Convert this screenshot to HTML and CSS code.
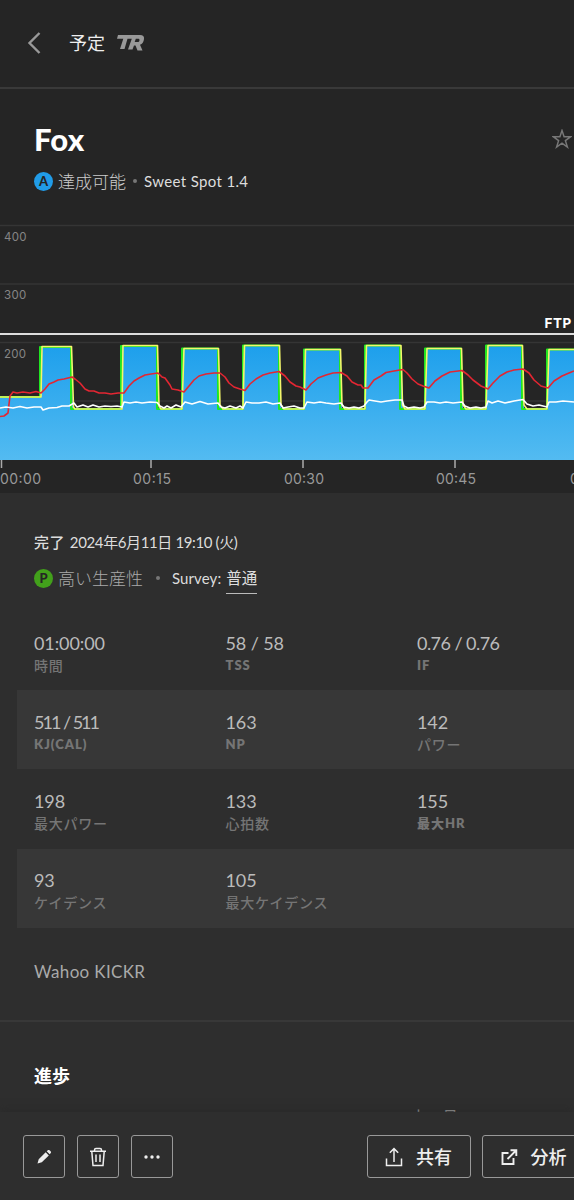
FILE: index.html
```html
<!DOCTYPE html>
<html lang="ja">
<head>
    <meta charset="UTF-8">
    <meta name="viewport" content="width=device-width, initial-scale=1.0">
    <title>Fox</title>
    <link rel="stylesheet" href="styles.css">
</head>
<body>
    <header class="top-bar">
        <svg class="back" width="14" height="22" viewBox="0 0 14 22"><path d="M12.500 1 2.500 11l10 10"/></svg>
        <span class="top-title">予定</span>
        <svg class="logo" width="28" height="16" viewBox="0 0 28 16">
            <path fill-rule="evenodd" d="M1 0H23Q27.500 0 27 4Q26.500 8.500 23 9.800L25.500 15.500H20.500L18.500 10.500H17L15.500 14.500H11L14.800 3.800H10.500L7.500 14H3L6.300 3.800H0ZM18.800 3.800L17.700 7H21.500Q22.500 6.500 22.500 5.200Q22.500 3.800 21.500 3.800Z"/>
        </svg>
    </header>

    <section class="workout">
        <div class="workout-head">
            <h1>Fox</h1>
            <svg class="star" width="20" height="20" viewBox="0 0 20 20"><path d="M10 1.500l2.100 6.200h6.700l-5.400 3.900 2 6.400-5.400-3.900-5.400 3.900 2-6.400-5.400-3.900h6.700z"/></svg>
        </div>
        <div class="workout-type">
            <span class="badge badge-a">A</span>
            <span class="level">達成可能</span>
            <span class="dot"></span>
            <span class="zone">Sweet Spot 1.4</span>
        </div>
    </section>

    <svg class="chart" width="574" height="273" viewBox="0 220 574 273">
        <defs>
            <linearGradient id="power" x1="0" y1="345" x2="0" y2="460" gradientUnits="userSpaceOnUse">
                <stop offset="0" stop-color="#1d9fec"/>
                <stop offset="1" stop-color="#53bbf1"/>
            </linearGradient>
        </defs>
        <path class="grid" d="M0 225.500H574M0 284H574M0 342.500H574M0 401H574"/>
        <g class="y-labels">
            <text x="4" y="240.500">400</text>
            <text x="4" y="299">300</text>
            <text x="4" y="357.500">200</text>
        </g>
        <path fill="url(#power)" d="M0 460V397H40.500L42 347H71L73 409H122V346H157L158.500 409H183V349H218L220 409H244V346H279L281 409H305V350H340L342 409H366V346H401L403 409H426V349H461L463 409H487V346H522L524 409H548V350H574V460Z"/>
        <path class="target" d="M0 397H40V347H71V409H121V346H157V409H182V348.500H218V409H243V345.500H279V409H304V349.500H340V409H365V345.500H400V409H425V348.500H461V409H486V345.500H522V409H547V349.500H574"/>
        <path class="actual" d="M0 397H41L42 346.500H71.500L73.500 407 75 409H122L123 345.500H157.500L159 406 161 409H182L184 348.500H218.500L220 405 223 409H243L244.500 345.500H279.500L281 405 284 409H304L305.500 349.500H340.500L342 405 345 409H365L366.500 345.500H401L402.500 405 405 409H425L427 348.500H461.500L463 405 466 409H486L488 345.500H522.500L524 405 527 409H547L549 349.500H574"/>
        <path class="heart" d="M0 416.500L4 416 8 413 9 404 10 396 13 392 17 393 23 392 30 393 36 391.500 41 393 45 389 49 384 54 382 58 380 64 379 72 377 75 379 80 383 85 389 89 391 94 391 99 393 105 393 111 394 118 393 124 393 129 386 134 381 139 378 145 375 151 374 158 373 162 377 165 378 170 385 172 389 178 390 184 392 189 386 194 380 199 376 206 374 214 373 220 373 225 377 229 383 234 387 240 389 245 390.500 250 384 256 379 263 375 270 373 279 371.500 285 376 290 382 296 386 300 387 306 390 311 384 318 378 326 375 333 373 341 372.500 347 376 352 382 358 385 361 385 363 388 368 388 374 380 381 376 386 372.500 394 371 403 369.500 407 373 412 379 418 384 423 386 429 388 435 381 442 376 450 372 462 370.500 468 375 473 380 481 386 488 389 493 383 500 376 507 372 514 370 523 369 529 373 534 380 541 386 548 388 554 381 562 376 569 373 574 371"/>
        <path class="cadence" d="M0 408L6 407 13 408 20 406.500 27 408 34 407 41 407 43 410 49 408 57 407.500 62 406 69 406 74 403 77 407 83 405 88 407 93 405 99 407 105 406 111 406.500 117 406 122 407 124 402 130 403 136 402 142 403 150 402 157 402.500 160 406 164 408 167 406 171 408 176 405 181 407 185 402 192 404 200 401.500 208 404 218 403 221 407 225 408 230 406 236 408 240 406 243 408 246 402 252 403 259 403 266 402 273 404 280 403 283 408 288 407 294 406 300 408 304 408 307 402 314 403 320 402 326 403 334 404 341 403 344 407 349 408 354 407 359 408 364 406 367 402 369 400 375 401 381 402 387 401 395 400 402 400 404 406 408 408 414 407 420 408 424 407 427 402 434 402 440 403 446 402 453 403 462 402 465 406 470 408 476 407 481 408 486 407 488 401 492 403 498 401 505 403 514 401 523 399.500 527 404 533 406 539 405 547 407 549 402 556 402 563 401 574 402"/>
        <path class="ftp" d="M0 334H574"/>
        <text class="ftp-label" x="544.500" y="328">FTP</text>
        <path class="ticks" d="M1.500 460V468M151 460V468M303 460V468M455 460V468"/>
        <g class="x-labels">
            <text x="0" y="484" textLength="41">00:00</text>
            <text x="133" y="484" textLength="38">00:15</text>
            <text x="284" y="484" textLength="40">00:30</text>
            <text x="436" y="484" textLength="40">00:45</text>
            <text x="570" y="484">01:00</text>
        </g>
    </svg>

    <main class="details">
        <div class="completed"><b>完了</b> <span>2024年6月11日 19:10 (火)</span></div>
        <div class="survey">
            <span class="badge badge-p">P</span>
            <span class="result">高い生産性</span>
            <span class="dot"></span>
            <span class="survey-label">Survey:</span>
            <a class="survey-value">普通</a>
        </div>

        <div class="stats">
            <div class="stats-row">
                <div class="stat"><div class="value">01:00:00</div><div class="label">時間</div></div>
                <div class="stat"><div class="value">58 / 58</div><div class="label latin">TSS</div></div>
                <div class="stat"><div class="value narrow">0.76 / 0.76</div><div class="label latin">IF</div></div>
            </div>
            <div class="stats-row">
                <div class="stat"><div class="value ones">511 / 511</div><div class="label latin">KJ(CAL)</div></div>
                <div class="stat"><div class="value">163</div><div class="label latin">NP</div></div>
                <div class="stat"><div class="value">142</div><div class="label">パワー</div></div>
            </div>
            <div class="stats-row">
                <div class="stat"><div class="value">198</div><div class="label">最大パワー</div></div>
                <div class="stat"><div class="value">133</div><div class="label">心拍数</div></div>
                <div class="stat"><div class="value">155</div><div class="label latin">最大HR</div></div>
            </div>
            <div class="stats-row">
                <div class="stat"><div class="value">93</div><div class="label">ケイデンス</div></div>
                <div class="stat"><div class="value">105</div><div class="label">最大ケイデンス</div></div>
            </div>
        </div>
        <div class="device">Wahoo KICKR</div>
    </main>

    <section class="progress">
        <h2>進歩</h2>
        <div class="progress-date">上 6月 2024</div>
    </section>

    <footer class="actions">
        <button class="btn icon-btn">
            <svg width="20" height="20" viewBox="0 0 20 20"><path class="fill" d="M3.500 16.500l1.200-4.300 7-6.900 3.100 3.100-7 6.900zM12.700 4.300l1.400-1.200q.8-.5 1.500.2l1.200 1.200q.6.700 0 1.500l-1.100 1.300z"/></svg>
        </button>
        <button class="btn icon-btn">
            <svg width="20" height="20" viewBox="0 0 20 20"><path d="M2 4.200H18M3.800 4.500L5 18.500H15L16.200 4.500M6.500 4V3Q6.500 1.500 8 1.500H12Q13.500 1.500 13.500 3V4M8 7.500V15M12 7.500V15"/></svg>
        </button>
        <button class="btn icon-btn">
            <svg width="20" height="20" viewBox="0 0 20 20"><g class="fill"><circle cx="4" cy="10" r="1.700"/><circle cx="10" cy="10" r="1.700"/><circle cx="16" cy="10" r="1.700"/></g></svg>
        </button>
        <button class="btn share">
            <svg width="20" height="20" viewBox="0 0 20 20"><path d="M2.500 11.500V18.500H17.500V11.500M10 15V2M5.800 5.800L10 1.600 14.200 5.800"/></svg>
            <span>共有</span>
        </button>
        <button class="btn analyze">
            <svg width="20" height="20" viewBox="0 0 20 20"><path class="bold" d="M9.500 6H3.500V17H14.500V11M8.500 12L17 3.500M11.500 3.200H17.300V9"/></svg>
            <span>分析</span>
        </button>
    </footer>
</body>
</html>
```
FILE: styles.css
```css
* {
    box-sizing: border-box;
}

body {
    margin: 0;
    height: 1200px;
    overflow: hidden;
    display: flex;
    flex-direction: column;
    background: #252525;
    color: #ddd;
    font-family: Lato, "Noto Sans CJK JP", sans-serif;
    line-height: 1;
}

h1,
h2 {
    margin: 0;
    color: #fff;
}

.top-bar {
    height: 89px;
    flex: none;
    display: flex;
    align-items: center;
    padding: 0 0 1px 27px;
    border-bottom: 2px solid #393939;
}

.back {
    fill: none;
    stroke: #999;
    stroke-width: 2.4;
}

.top-title {
    margin: 0 12px 0 28px;
    font-size: 18px;
    color: #eee;
}

.logo {
    fill: #999;
}

.workout {
    height: 131px;
    flex: none;
    padding: 34px 0 0 34px;
}

.workout-head {
    display: flex;
    justify-content: space-between;
    align-items: center;
    padding-right: 2px;
}

h1 {
    font-size: 31px;
    font-weight: 900;
    letter-spacing: 0.2px;
    line-height: 32px;
}

.star {
    fill: none;
    stroke: #777;
    stroke-width: 1.5;
}

.workout-type {
    display: flex;
    align-items: center;
    height: 24px;
    margin-top: 14px;
}

.badge {
    width: 19px;
    height: 19px;
    border-radius: 50%;
    display: flex;
    align-items: center;
    justify-content: center;
    margin-right: 5px;
    font-size: 13px;
    font-weight: 900;
    color: #252525;
}

.badge-a {
    background: #219ce8;
}

.badge-p {
    background: #42a01b;
}

.level,
.result {
    font-size: 17px;
    font-weight: 300;
    color: #ccc;
}

.dot {
    width: 4px;
    height: 4px;
    border-radius: 50%;
    background: #777;
    margin: 0 7px;
}

.zone {
    font-size: 15px;
    letter-spacing: 0.35px;
}

.chart {
    display: block;
    flex: none;
    font-family: Inter, sans-serif;
}

.grid {
    stroke: #353535;
    stroke-width: 1.5;
}

.y-labels {
    fill: #858585;
    font-size: 11.5px;
    letter-spacing: 0.3px;
}

.x-labels {
    fill: #999;
    font-size: 14px;
}

.ticks {
    stroke: #aaa;
    stroke-width: 1.5;
}

.target,
.actual,
.heart,
.cadence {
    fill: none;
    stroke-width: 1.6;
    stroke-linejoin: round;
}

.target {
    stroke: #20e620;
    stroke-width: 2;
}

.actual {
    stroke: #f4f66b;
}

.heart {
    stroke: #e32632;
}

.cadence {
    stroke: #fff;
}

.ftp {
    stroke: #ddd;
    stroke-width: 1.8;
}

.ftp-label {
    fill: #fff;
    font-size: 13.5px;
    font-weight: 700;
    letter-spacing: 0.5px;
}

.details {
    height: 529px;
    flex: none;
    background: #2e2e2e;
    border-bottom: 2px solid #383838;
}

.completed {
    padding: 41px 0 0 34px;
    font-size: 15px;
    line-height: 16px;
}

.completed b {
    font-weight: 500;
    letter-spacing: 0.5px;
}

.completed span {
    letter-spacing: -0.38px;
    margin-left: 1px;
}

.survey {
    display: flex;
    align-items: center;
    height: 32px;
    margin-top: 12px;
    padding-left: 34px;
}

.survey .result {
    color: #aaa;
}

.survey .dot {
    margin: 0 12px 0 13px;
}

.survey-label {
    font-size: 15px;
    letter-spacing: 0.1px;
    margin-right: 5px;
}

.survey-value {
    font-size: 15.5px;
    height: 31px;
    line-height: 30px;
    border-bottom: 1.5px solid #bbb;
}

.stats {
    margin: 17px 0 0 17px;
}

.stats-row {
    display: grid;
    grid-template-columns: 191.5px 191.5px 1fr;
    height: 79.2px;
    padding: 21.5px 0 0 17px;
}

.stats-row:nth-child(even) {
    background: #373737;
}

.value {
    font-size: 18px;
    line-height: 20px;
    letter-spacing: -0.1px;
    color: #bbb;
}

.value.narrow {
    letter-spacing: -0.55px;
}

/* the ones sit tight next to each other */
.value.ones {
    letter-spacing: -2px;
    word-spacing: 1px;
}

.label {
    margin-top: 5px;
    font-size: 14px;
    font-weight: 500;
    line-height: 16px;
    letter-spacing: 0.75px;
    color: #757575;
}

.label.latin {
    margin-top: 4px;
    font-size: 13px;
    font-weight: 800;
    letter-spacing: 1px;
}

.device {
    padding: 34px 0 0 34px;
    font-size: 17px;
    line-height: 20px;
    letter-spacing: 0.35px;
    color: #aaa;
}

.progress {
    height: 90px;
    flex: none;
    overflow: hidden;
    background: #2e2e2e;
    padding: 44px 34px 0;
}

h2 {
    font-size: 18px;
    line-height: 20px;
}

.progress-date {
    margin: 21px 0 0 377px;
    font-size: 16px;
    line-height: 20px;
    letter-spacing: 0.5px;
}

.actions {
    height: 88px;
    flex: none;
    display: flex;
    align-items: flex-start;
    gap: 12px;
    padding: 23px 0 0 23px;
    background: #2e2e2e;
    box-shadow: 0 -2px 8px #292929;
}

.btn {
    flex: none;
    height: 43px;
    display: flex;
    align-items: center;
    justify-content: center;
    gap: 12px;
    padding: 0;
    border: 1.5px solid #999;
    border-radius: 3px;
    background: none;
    color: #eee;
    font: 500 18px Lato, "Noto Sans CJK JP", sans-serif;
}

.btn span {
    margin-top: -2px;
}

.btn svg {
    fill: none;
    stroke: #eee;
    stroke-width: 1.5;
}

.btn .fill {
    fill: #eee;
    stroke: none;
}

.btn .bold {
    stroke-width: 1.9;
}

.icon-btn {
    width: 42px;
}

.share {
    width: 104px;
    margin-left: 182px;
    padding-right: 2px;
}

.analyze {
    width: 104px;
    margin-left: -1px;
    padding-right: 3px;
}
```
